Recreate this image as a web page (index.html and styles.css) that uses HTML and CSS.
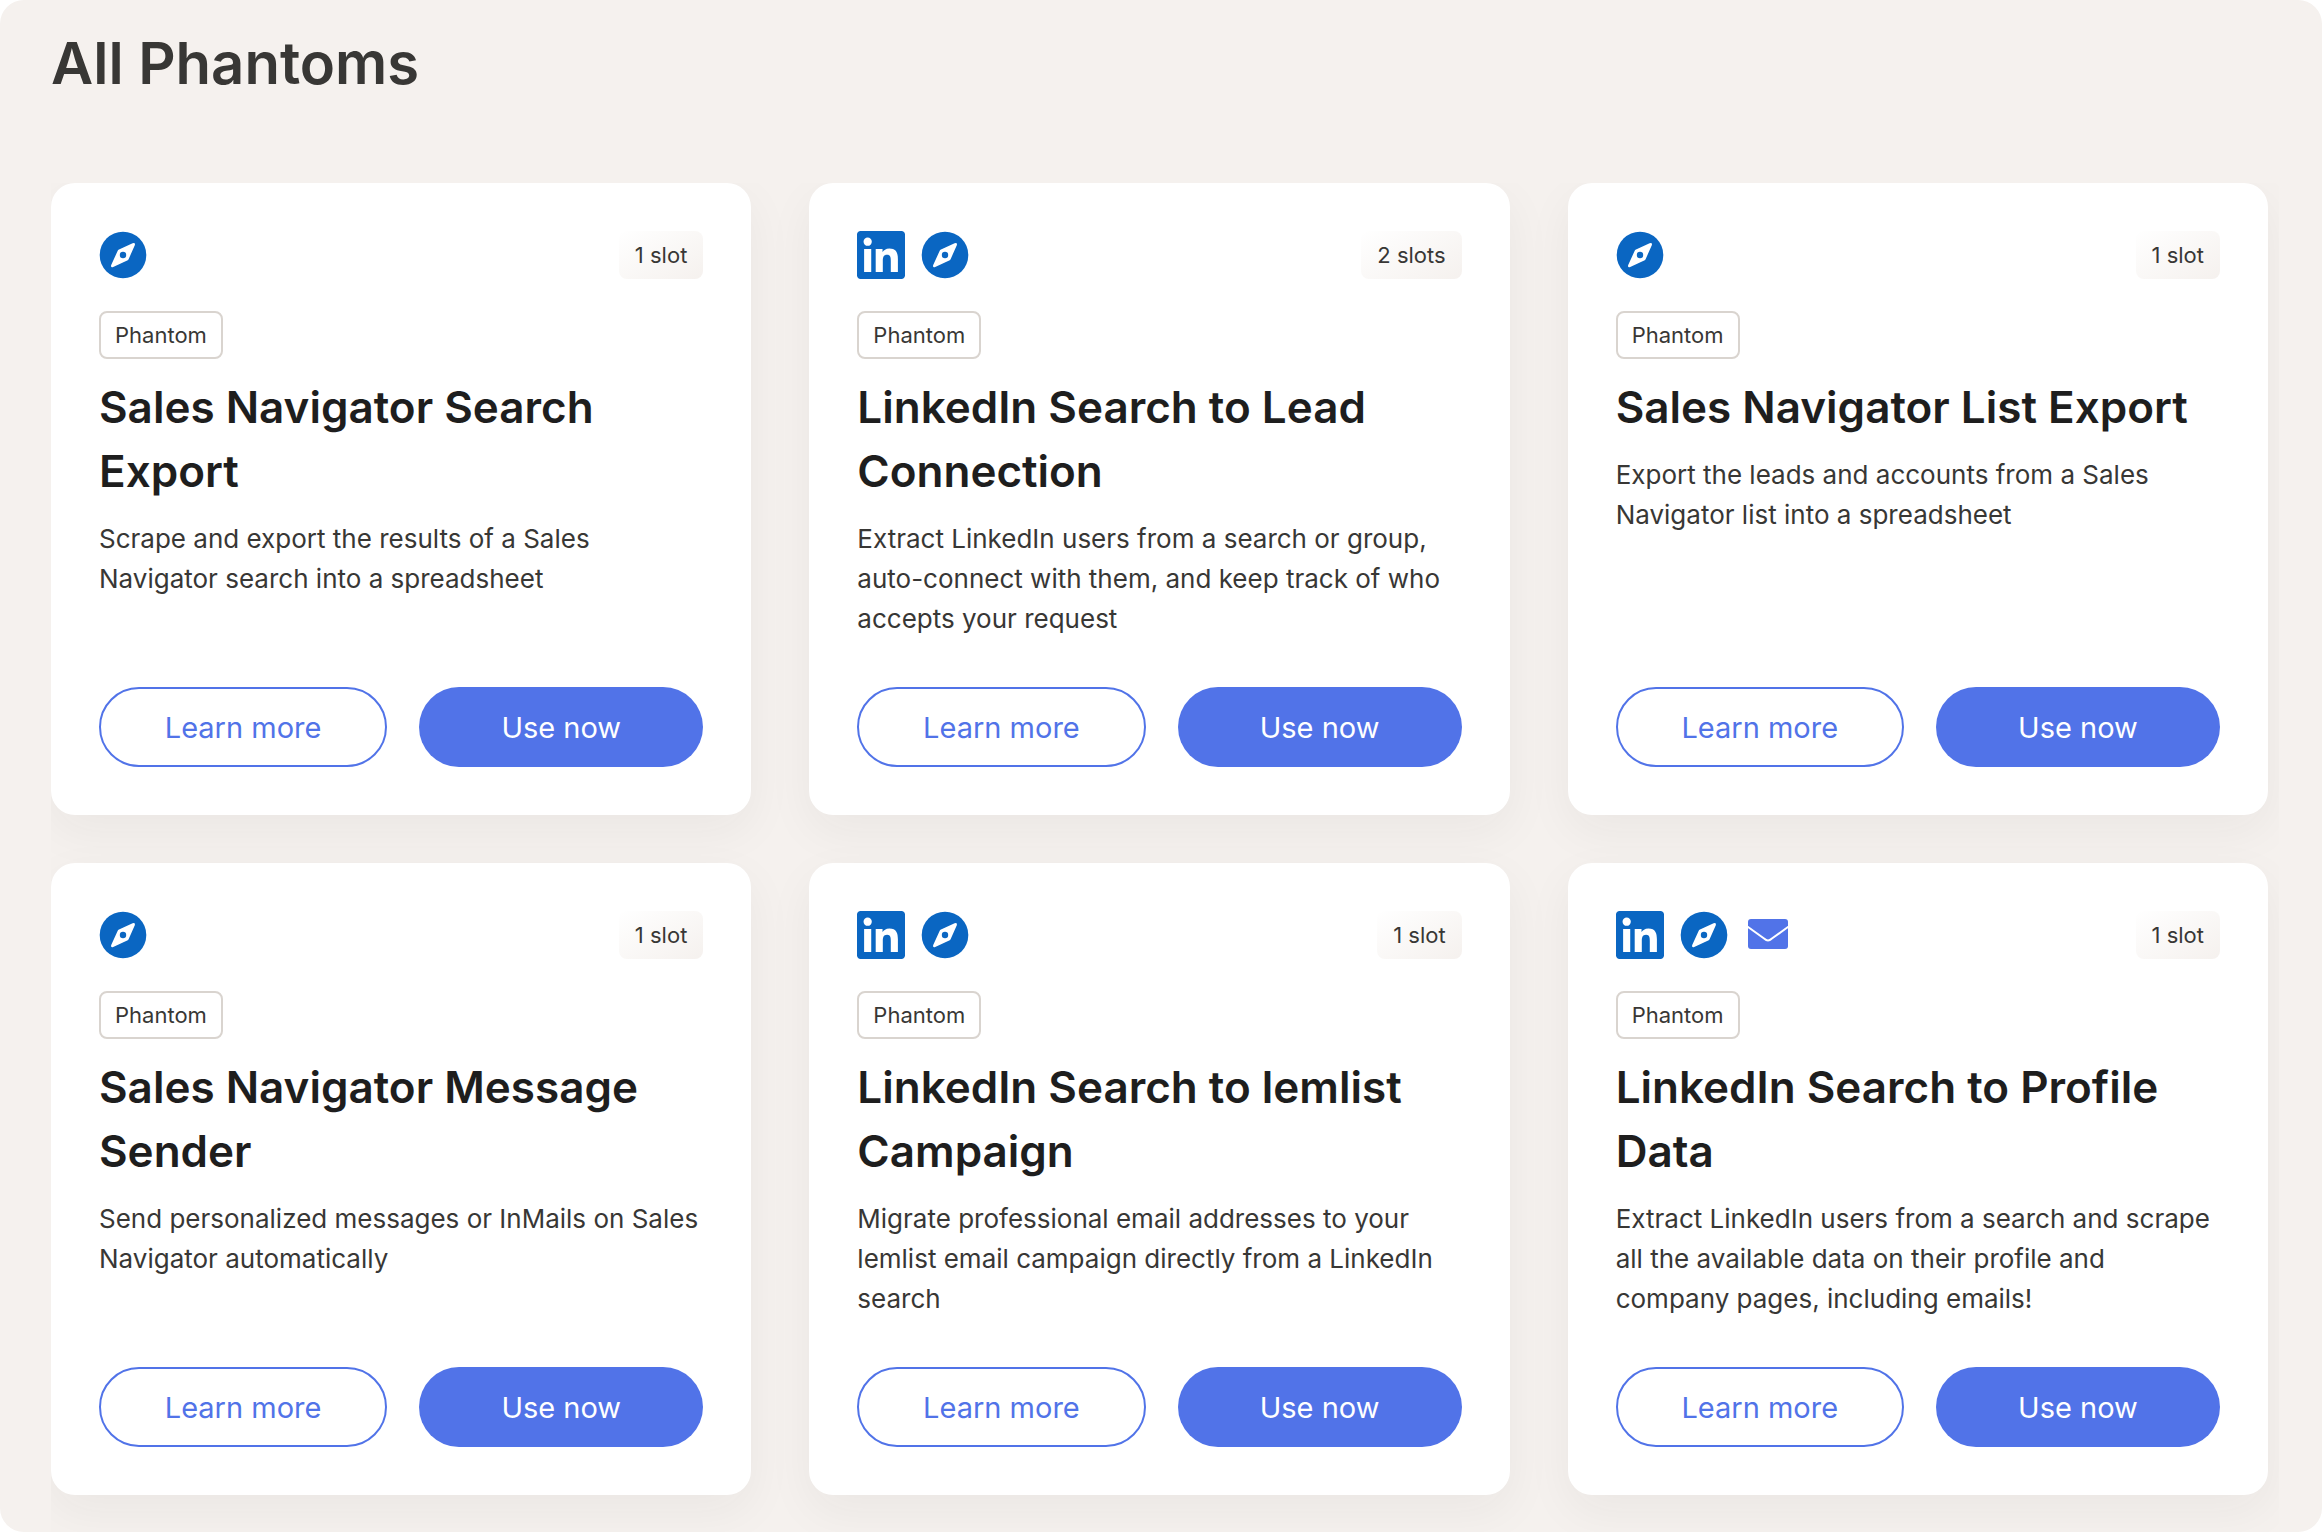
FILE: index.html
```html
<!DOCTYPE html>
<html lang="en">
<head>
    <meta charset="UTF-8">
    <meta name="viewport" content="width=device-width, initial-scale=1.0">
    <title>All Phantoms</title>
    <link rel="stylesheet" href="styles.css">
</head>
<body>
    <svg class="sprite" aria-hidden="true">
        <symbol id="icon-linkedin" viewBox="0 0 24 24">
            <path fill="#0a66c2" d="M20.447 20.452h-3.554v-5.569c0-1.328-.027-3.037-1.852-3.037-1.853 0-2.136 1.445-2.136 2.939v5.667H9.351V9h3.414v1.561h.046c.477-.9 1.637-1.85 3.37-1.85 3.601 0 4.267 2.37 4.267 5.455v6.286zM5.337 7.433a2.062 2.062 0 0 1-2.063-2.065 2.064 2.064 0 1 1 2.063 2.065zm1.782 13.019H3.555V9h3.564v11.452zM22.225 0H1.771C.792 0 0 .774 0 1.729v20.542C0 23.227.792 24 1.771 24h20.451C23.2 24 24 23.227 24 22.271V1.729C24 .774 23.2 0 22.222 0h.003z"/>
        </symbol>
        <symbol id="icon-navigator" viewBox="0 0 48 48">
            <circle cx="24" cy="24" r="23.3" fill="#0a66c2"/>
            <path fill="#fff" d="M33.6 12.3 20 18.6Q19 19.1 18.6 20L12.1 34.2Q11.6 36.8 14.2 35.9L28.2 29.6Q29.2 29.1 29.6 28.2L35.9 14Q36.4 11.3 33.6 12.3Z"/>
            <circle cx="24" cy="24" r="3.2" fill="#0a66c2"/>
        </symbol>
        <symbol id="icon-mail" viewBox="0 0 48 48">
            <rect x="4" y="8" width="40" height="30" rx="3" fill="#5173e8"/>
            <path fill="none" stroke="#fff" stroke-width="2" d="M3 15.2 20.4 27.8Q24 31.4 27.6 27.8L45 15.2"/>
        </symbol>
    </svg>

    <main class="page">
        <h1>All Phantoms</h1>

        <div class="grid">
            <article class="card">
                <div class="card-top">
                    <div class="icons">
                        <svg role="img" aria-label="Sales Navigator"><use href="#icon-navigator"/></svg>
                    </div>
                    <span class="slots">1 slot</span>
                </div>
                <span class="tag">Phantom</span>
                <h2>Sales Navigator Search Export</h2>
                <p>Scrape and export the results of a Sales Navigator search into a spreadsheet</p>
                <div class="actions">
                    <button type="button" class="btn btn-outline">Learn more</button>
                    <button type="button" class="btn btn-primary">Use now</button>
                </div>
            </article>

            <article class="card">
                <div class="card-top">
                    <div class="icons">
                        <svg role="img" aria-label="LinkedIn"><use href="#icon-linkedin"/></svg>
                        <svg role="img" aria-label="Sales Navigator"><use href="#icon-navigator"/></svg>
                    </div>
                    <span class="slots">2 slots</span>
                </div>
                <span class="tag">Phantom</span>
                <h2>LinkedIn Search to Lead Connection</h2>
                <p>Extract LinkedIn users from a search or group, auto-connect with them, and keep track of who accepts your request</p>
                <div class="actions">
                    <button type="button" class="btn btn-outline">Learn more</button>
                    <button type="button" class="btn btn-primary">Use now</button>
                </div>
            </article>

            <article class="card">
                <div class="card-top">
                    <div class="icons">
                        <svg role="img" aria-label="Sales Navigator"><use href="#icon-navigator"/></svg>
                    </div>
                    <span class="slots">1 slot</span>
                </div>
                <span class="tag">Phantom</span>
                <h2>Sales Navigator List Export</h2>
                <p>Export the leads and accounts from a Sales Navigator list into a spreadsheet</p>
                <div class="actions">
                    <button type="button" class="btn btn-outline">Learn more</button>
                    <button type="button" class="btn btn-primary">Use now</button>
                </div>
            </article>

            <article class="card">
                <div class="card-top">
                    <div class="icons">
                        <svg role="img" aria-label="Sales Navigator"><use href="#icon-navigator"/></svg>
                    </div>
                    <span class="slots">1 slot</span>
                </div>
                <span class="tag">Phantom</span>
                <h2>Sales Navigator Message Sender</h2>
                <p>Send personalized messages or InMails on Sales Navigator automatically</p>
                <div class="actions">
                    <button type="button" class="btn btn-outline">Learn more</button>
                    <button type="button" class="btn btn-primary">Use now</button>
                </div>
            </article>

            <article class="card">
                <div class="card-top">
                    <div class="icons">
                        <svg role="img" aria-label="LinkedIn"><use href="#icon-linkedin"/></svg>
                        <svg role="img" aria-label="Sales Navigator"><use href="#icon-navigator"/></svg>
                    </div>
                    <span class="slots">1 slot</span>
                </div>
                <span class="tag">Phantom</span>
                <h2>LinkedIn Search to lemlist Campaign</h2>
                <p>Migrate professional email addresses to your lemlist email campaign directly from a LinkedIn search</p>
                <div class="actions">
                    <button type="button" class="btn btn-outline">Learn more</button>
                    <button type="button" class="btn btn-primary">Use now</button>
                </div>
            </article>

            <article class="card">
                <div class="card-top">
                    <div class="icons">
                        <svg role="img" aria-label="LinkedIn"><use href="#icon-linkedin"/></svg>
                        <svg role="img" aria-label="Sales Navigator"><use href="#icon-navigator"/></svg>
                        <svg role="img" aria-label="Email"><use href="#icon-mail"/></svg>
                    </div>
                    <span class="slots">1 slot</span>
                </div>
                <span class="tag">Phantom</span>
                <h2>LinkedIn Search to Profile Data</h2>
                <p>Extract LinkedIn users from a search and scrape all the available data on their profile and company pages, including emails!</p>
                <div class="actions">
                    <button type="button" class="btn btn-outline">Learn more</button>
                    <button type="button" class="btn btn-primary">Use now</button>
                </div>
            </article>
        </div>
    </main>
</body>
</html>
```
FILE: styles.css
```css
* {
    box-sizing: border-box;
}
body {
    margin: 0;
    background-color: #ffffff;
    color: #383735;
    font-family: Inter, 'Liberation Sans', sans-serif;
    font-size: 26px;
    line-height: 40px;
}
.sprite {
    display: none;
}
.page {
    display: flex;
    flex-direction: column;
    min-height: 100vh;
    padding: 23px 43px 0 51px;
    background-color: #f5f1ee;
    border-radius: 24px;
}
h1 {
    margin: 0 0 80px;
    font-size: 58px;
    font-weight: 600;
    line-height: 80px;
}
/* the overflow trims the card shadows at the edges of the list */
.grid {
    flex: 1;
    display: grid;
    grid-template-columns: repeat(auto-fit, minmax(560px, 1fr));
    align-content: start;
    gap: 48px 58px;
    padding: 0 11px 37px 0;
    overflow: hidden;
}
.card {
    display: flex;
    flex-direction: column;
    padding: 48px;
    background-color: #ffffff;
    border-radius: 24px;
    box-shadow: 0 16px 48px rgba(30, 30, 30, 0.05);
}
.card-top {
    display: flex;
    justify-content: space-between;
    align-items: center;
    margin-bottom: 32px;
}
.icons {
    display: flex;
    gap: 16px;
}
.icons svg {
    width: 48px;
    height: 48px;
}
.slots, .tag {
    height: 48px;
    padding: 0 16px;
    border-radius: 8px;
    font-size: 22px;
    line-height: 48px;
}
.slots {
    background: linear-gradient(150deg, #ffffff, #f5f1ee);
}
.tag {
    align-self: flex-start;
    padding: 0 14px;
    border: 2px solid #d9d4cf;
    line-height: 44px;
}
h2 {
    margin: 16px 0;
    color: #1e1e1e;
    font-size: 44px;
    font-weight: 600;
    line-height: 64px;
}
p {
    margin: 0 0 48px;
}
.actions {
    display: flex;
    gap: 32px;
    margin-top: auto;
}
.btn {
    flex: 1;
    height: 80px;
    padding: 0 32px;
    border: 0;
    border-radius: 40px;
    font-family: inherit;
    font-size: 29px;
    cursor: pointer;
}
.btn-outline {
    border: 2px solid #5173e8;
    background-color: #ffffff;
    color: #5173e8;
}
.btn-primary {
    background-color: #5173e8;
    color: #ffffff;
}
```
